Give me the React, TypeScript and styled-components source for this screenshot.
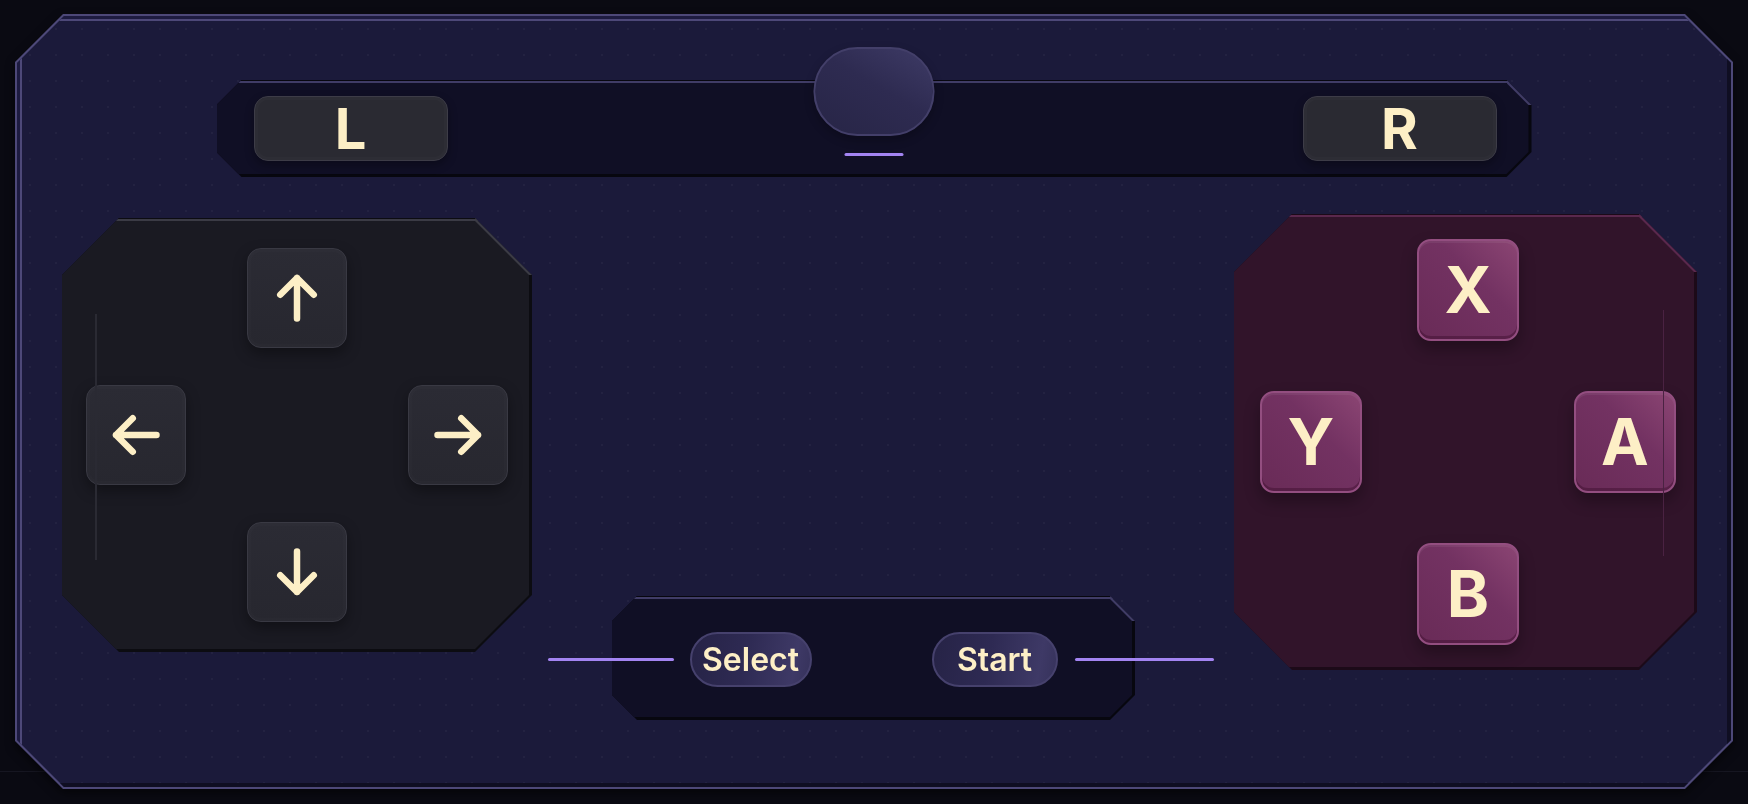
import React from 'react';
import styled, {createGlobalStyle} from 'styled-components';

const CREAM = '#fdefc6';
const ACCENT = '#a384f2';

const GlobalStyle = createGlobalStyle`
  html, body, #root {
    margin: 0;
    padding: 0;
    height: 100%;
  }

  body {
    background:
      linear-gradient(
        to bottom,
        transparent 771px,
        #161621 771px,
        #161621 772px,
        transparent 772px
      ),
      #0a0a12;
    font-family: Inter, 'Noto Sans', 'Liberation Sans', sans-serif;
    overflow: hidden;
  }
`;

// Octagon outline with equal cut corners
const octagon = (c: number) =>
  `polygon(${c}px 0, calc(100% - ${c}px) 0, 100% ${c}px, 100% calc(100% - ${c}px), calc(100% - ${c}px) 100%, ${c}px 100%, 0 calc(100% - ${c}px), 0 ${c}px)`;

interface BevelProps {
  $cut: number;
  $fill: string;
  $light: string;
  $dark: string;
}

// Cut-corner plate: lit top edge, shaded right and bottom edges
const Bevel = styled.div<BevelProps>`
  position: relative;
  isolation: isolate;
  box-sizing: border-box;

  &::before {
    content: '';
    position: absolute;
    inset: 0;
    z-index: -2;
    clip-path: ${({$cut}) => octagon($cut)};
    background:
      linear-gradient(${({$light}) => $light}, ${({$light}) => $light}) top
        right / ${({$cut}) => `${$cut}px ${$cut}px`} no-repeat,
      linear-gradient(
          to bottom,
          ${({$dark}) => $dark} 0 1px,
          ${({$light}) => $light} 1px 3px
        )
        top / 100% 3px no-repeat,
      ${({$dark}) => $dark};
  }

  &::after {
    content: '';
    position: absolute;
    top: 3px;
    left: 0;
    right: 3px;
    bottom: 3px;
    z-index: -1;
    clip-path: ${({$cut}) => octagon($cut - 3)};
    background: ${({$fill}) => $fill};
  }
`;

const Page = styled.div`
  box-sizing: border-box;
  height: 804px;
  padding: 14px 15px 15px;
`;

const Shell = styled.main`
  position: relative;
  isolation: isolate;
  box-sizing: border-box;
  height: 775px;
  padding-top: 66px;
  filter: drop-shadow(0 4px 5px rgba(0, 0, 0, 0.55));

  &::before {
    content: '';
    position: absolute;
    inset: 0;
    z-index: -2;
    clip-path: ${octagon(48)};
    background: #4d4878;
  }

  &::after {
    content: '';
    position: absolute;
    inset: 2px;
    z-index: -1;
    clip-path: ${octagon(47)};
    background:
      radial-gradient(rgba(255, 255, 255, 0.035) 1px, transparent 1.6px) 0 0 /
        26px 26px,
      #1b1a3a;
    box-shadow:
      inset 3px 3px 0 #1d1b40,
      inset 5px 5px 0 #4d4878,
      inset -4px -4px 0 #0f0e22;
  }
`;

const ShoulderBar = styled(Bevel)`
  width: 1315px;
  height: 97px;
  margin: 0 auto;
  display: flex;
  align-items: center;
  justify-content: space-between;
  padding: 0 35px 0 37px;
`;

const Shoulder = styled.button`
  width: 194px;
  height: 65px;
  display: flex;
  align-items: center;
  justify-content: center;
  padding: 0;
  border: 1.5px solid #3d3c47;
  border-radius: 14px;
  background: #2a2a32;
  box-shadow:
    inset 0 0 0 3px rgba(255, 255, 255, 0.015),
    0 4px 10px rgba(0, 0, 0, 0.3);
  color: ${CREAM};
  font: 700 56px/1 Inter, 'Liberation Sans', sans-serif;
  cursor: pointer;
`;

const HomeButton = styled.button`
  position: absolute;
  left: 50%;
  top: -33px;
  transform: translateX(-50%);
  width: 121px;
  height: 89px;
  padding: 0;
  border: 2px solid #433f69;
  border-radius: 44px;
  background: linear-gradient(
    210deg,
    #3e3b66 0%,
    #2e2b51 45%,
    #272546 100%
  );
  box-shadow: 0 4px 10px rgba(0, 0, 0, 0.25);
  cursor: pointer;
`;

const HomeIndicator = styled.span`
  position: absolute;
  left: 50%;
  top: 73px;
  transform: translateX(-50%);
  width: 59px;
  height: 3px;
  border-radius: 2px;
  background: ${ACCENT};
`;

const Deck = styled.section`
  display: grid;
  grid-template-columns: 470px 1fr 463px;
  align-items: start;
  height: 506px;
  margin-top: 37px;
  padding: 0 36px 0 47px;
`;

const DPad = styled(Bevel)`
  width: 470px;
  height: 434px;
  margin-top: 4px;
  display: grid;
  grid-template-columns: repeat(3, 100px);
  grid-template-rows: repeat(3, 100px);
  grid-template-areas:
    '. up .'
    'left . right'
    '. down .';
  column-gap: 61px;
  row-gap: 37px;
  padding: 30px 0 0 24px;
`;

const FacePad = styled(Bevel)`
  width: 463px;
  height: 456px;
  display: grid;
  grid-template-columns: repeat(3, 102px);
  grid-template-rows: repeat(3, 102px);
  grid-template-areas:
    '. x .'
    'y . a'
    '. b .';
  column-gap: 55px;
  row-gap: 50px;
  padding: 25px 0 0 26px;
`;

const Rail = styled.span<{$side: 'left' | 'right'; $color: string}>`
  position: absolute;
  ${({$side}) => $side}: 33px;
  top: 96px;
  width: 1.5px;
  height: 246px;
  background: ${({$color}) => $color};
`;

const Key = styled.button<{$area: string}>`
  grid-area: ${({$area}) => $area};
  display: flex;
  align-items: center;
  justify-content: center;
  padding: 0;
  border: 1.5px solid #393943;
  border-radius: 14px;
  background: linear-gradient(180deg, #2b2b34 0%, #27272f 100%);
  box-shadow:
    inset 0 0 0 3px rgba(255, 255, 255, 0.012),
    0 6px 14px rgba(0, 0, 0, 0.35);
  cursor: pointer;
`;

const ArrowGlyph = styled.svg<{$turn: number}>`
  width: 48px;
  height: 48px;
  transform: rotate(${({$turn}) => $turn}deg);
`;

const FaceButton = styled.button<{$area: string}>`
  grid-area: ${({$area}) => $area};
  display: flex;
  align-items: center;
  justify-content: center;
  padding: 0;
  border: 2px solid #934e80;
  border-radius: 14px;
  background: linear-gradient(
    225deg,
    #8b4573 0%,
    #733262 40%,
    #692b57 100%
  );
  box-shadow:
    inset 0 -3px 0 rgba(60, 14, 44, 0.45),
    inset 0 2px 0 rgba(255, 255, 255, 0.06),
    0 8px 16px rgba(0, 0, 0, 0.3);
  color: ${CREAM};
  font: 700 64px/1 Inter, 'Liberation Sans', sans-serif;
  cursor: pointer;
`;

const Center = styled.div`
  align-self: stretch;
  display: flex;
  align-items: flex-end;
  padding-left: 80px;
`;

const SystemBar = styled(Bevel)`
  width: 523px;
  height: 124px;
  display: flex;
  align-items: center;
  justify-content: center;
  gap: 120px;
  padding-top: 3px;
`;

const SystemButton = styled.button<{$width: number; $lead: 'left' | 'right'}>`
  position: relative;
  width: ${({$width}) => $width}px;
  height: 55px;
  padding: 0;
  border: 2px solid #46416d;
  border-radius: 28px;
  background: linear-gradient(
    100deg,
    #262346 0%,
    #2e2a53 45%,
    #3e3966 85%,
    #36325b 100%
  );
  color: ${CREAM};
  font: 600 32px/1 Inter, 'Liberation Sans', sans-serif;
  cursor: pointer;

  &::before {
    content: '';
    position: absolute;
    top: 50%;
    margin-top: -2px;
    height: 3px;
    border-radius: 2px;
    background: ${ACCENT};
    ${({$lead}) =>
      $lead === 'left'
        ? 'right: calc(100% + 18px); width: 126px;'
        : 'left: calc(100% + 19px); width: 139px;'}
  }
`;

const DPAD_COLORS = {$cut: 57, $fill: '#1a1a22', $light: '#3b3b45', $dark: '#0c0c11'};
const FACE_COLORS = {$cut: 58, $fill: '#31142a', $light: '#5a284d', $dark: '#1c0a18'};
const BAR_COLORS = {$fill: '#100f25', $light: '#403c66', $dark: '#07070f'};

const Arrow: React.FC<{turn: number}> = ({turn}) => (
  <ArrowGlyph
    $turn={turn}
    viewBox="0 0 48 48"
    fill="none"
    stroke={CREAM}
    strokeWidth={6.5}
    strokeLinecap="round"
    strokeLinejoin="round"
  >
    <path d="M24 44.5V4M7.25 20.75 24 4l16.75 16.75" />
  </ArrowGlyph>
);

const arrows = [
  {area: 'up', turn: 0},
  {area: 'left', turn: -90},
  {area: 'right', turn: 90},
  {area: 'down', turn: 180},
];

const faces = ['X', 'Y', 'A', 'B'];

const App: React.FC = () => (
  <>
    <GlobalStyle />
    <Page>
      <Shell>
        <ShoulderBar $cut={25} {...BAR_COLORS}>
          <Shoulder>L</Shoulder>
          <HomeButton aria-label="Home" />
          <HomeIndicator />
          <Shoulder>R</Shoulder>
        </ShoulderBar>

        <Deck>
          <DPad {...DPAD_COLORS}>
            <Rail $side="left" $color="#2a2a33" />
            {arrows.map(({area, turn}) => (
              <Key key={area} $area={area} aria-label={area}>
                <Arrow turn={turn} />
              </Key>
            ))}
          </DPad>

          <Center>
            <SystemBar $cut={25} {...BAR_COLORS}>
              <SystemButton $width={122} $lead="left">
                Select
              </SystemButton>
              <SystemButton $width={126} $lead="right">
                Start
              </SystemButton>
            </SystemBar>
          </Center>

          <FacePad {...FACE_COLORS}>
            <Rail $side="right" $color="#4a2242" />
            {faces.map((label) => (
              <FaceButton key={label} $area={label.toLowerCase()}>
                {label}
              </FaceButton>
            ))}
          </FacePad>
        </Deck>
      </Shell>
    </Page>
  </>
);

export default App;
